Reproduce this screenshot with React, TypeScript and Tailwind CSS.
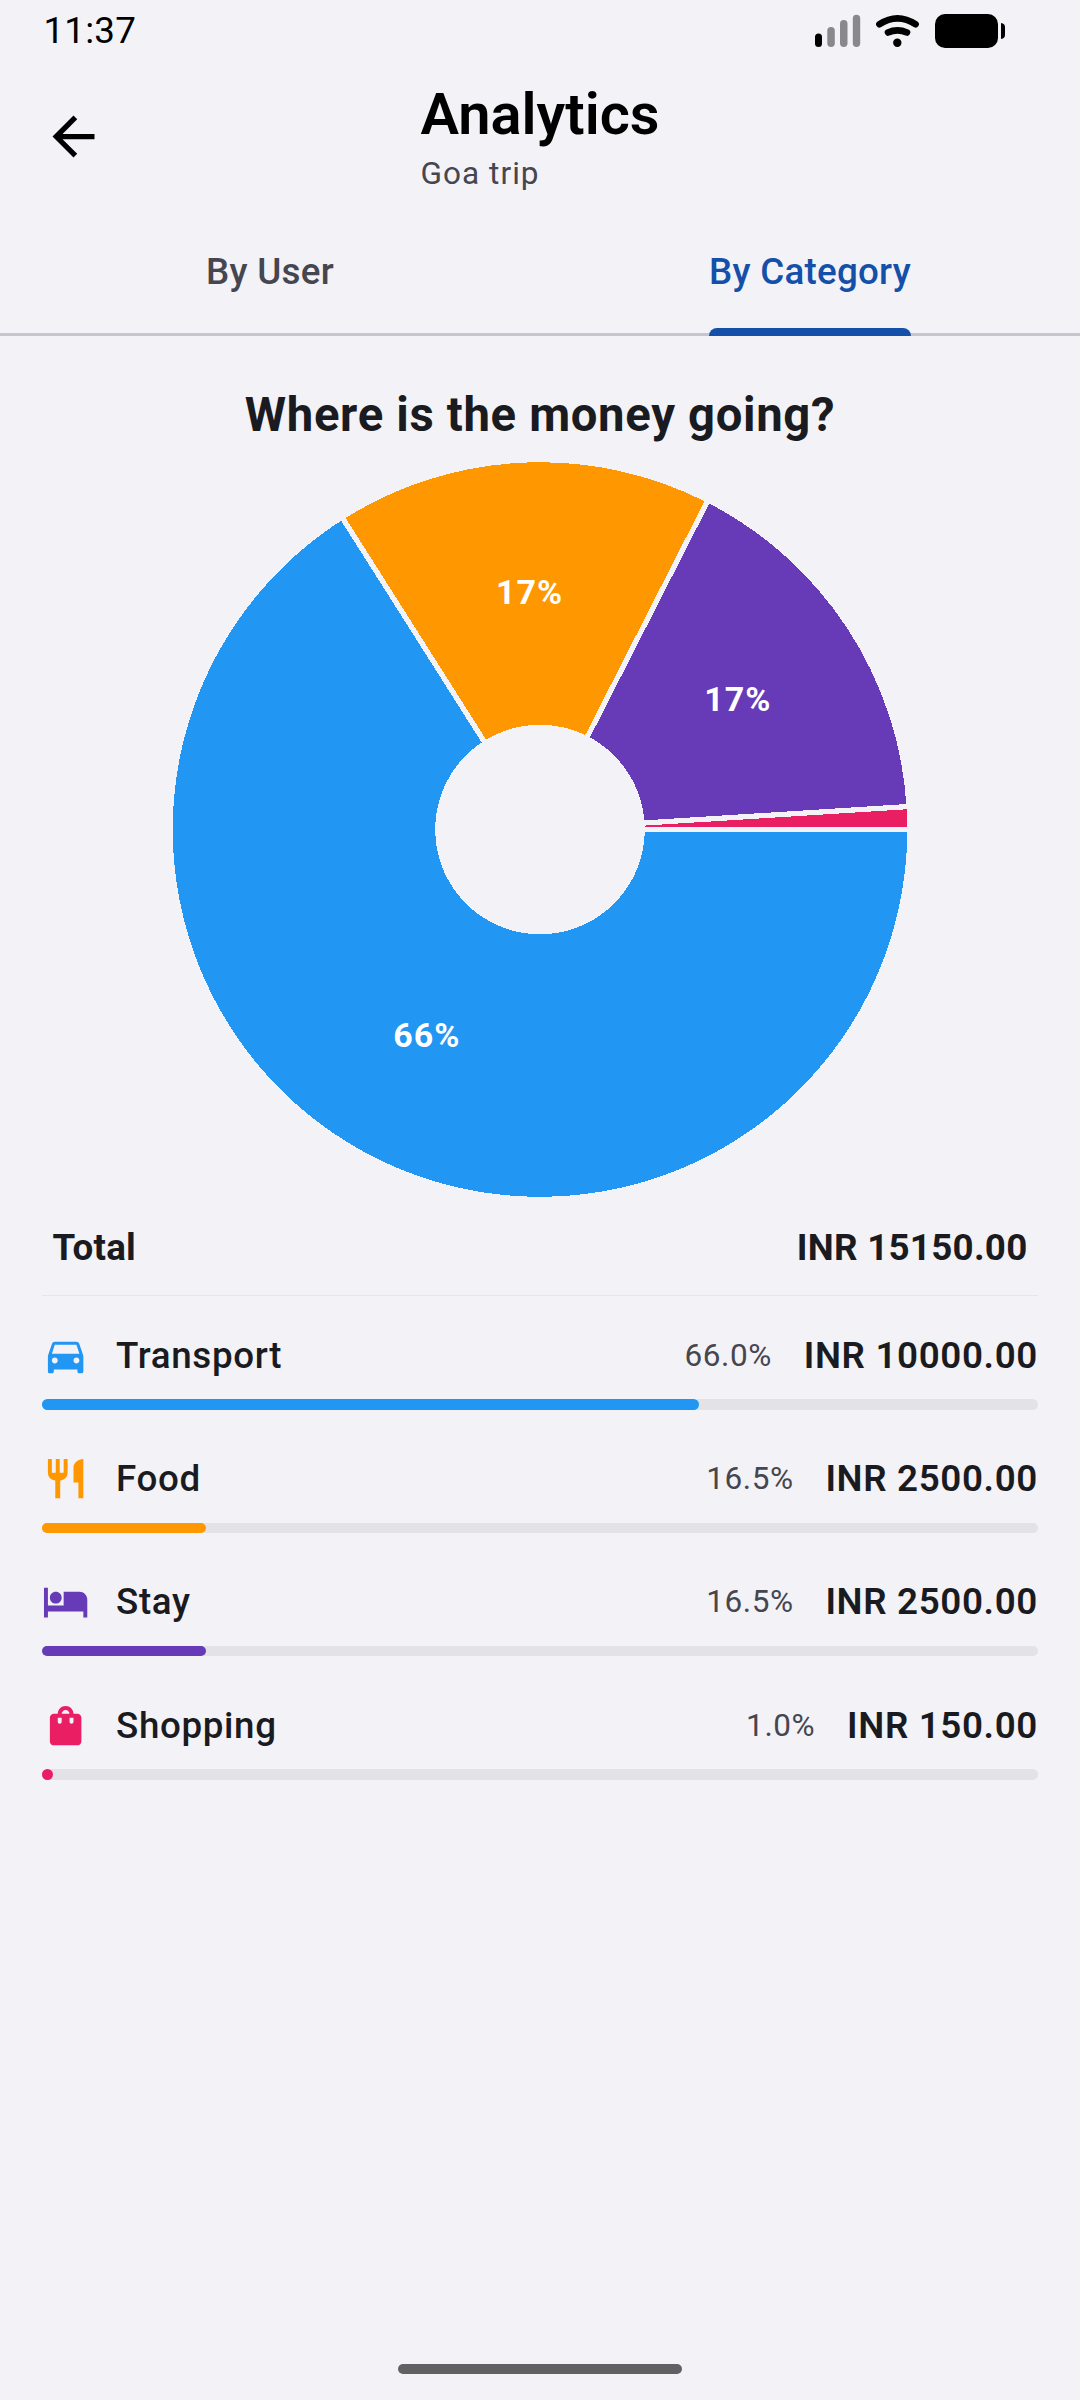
import { MdArrowBack, MdDirectionsCar, MdHotel, MdRestaurant, MdShoppingBag } from "react-icons/md";

const CATEGORIES = [
  { name: "Transport", amount: 10000, color: "#2196f3", icon: MdDirectionsCar },
  { name: "Food", amount: 2500, color: "#ff9800", icon: MdRestaurant },
  { name: "Stay", amount: 2500, color: "#673ab7", icon: MdHotel },
  { name: "Shopping", amount: 150, color: "#e91e63", icon: MdShoppingBag },
];

const TOTAL = CATEGORIES.reduce((sum, c) => sum + c.amount, 0);

const OUTER = 367.25;
const INNER = 104.75;
const GAP = 5.25;

function StatusBar() {
  return (
    <div className="flex h-[61px] items-center justify-between pl-[43.5px] pr-[75px]">
      <span className="pt-0.5 text-[36.75px] leading-none tracking-[0.2px] text-black">11:37</span>
      <svg className="mt-px" width="190" height="34" viewBox="815 14 190 34" fill="none">
        <rect x="815" y="33.5" width="7" height="13.5" rx="3.5" fill="#000" />
        <g fill="#89888b">
          <rect x="827.3" y="27" width="7.5" height="20" rx="3.7" />
          <rect x="840" y="20" width="7.5" height="27" rx="3.7" />
          <rect x="852.8" y="14.7" width="7.4" height="32.3" rx="3.7" />
        </g>
        <circle cx="897.3" cy="42.8" r="4.2" fill="#000" />
        <g stroke="#000" strokeWidth="6.6" strokeLinecap="round">
          <path d="M879.4 24.3Q897.5 12.3 915.6 24.3" />
          <path d="M888 32.5Q897.4 28.2 907 32.5" />
        </g>
        <rect x="935" y="14" width="63" height="34" rx="10" fill="#000" />
        <path d="M1001 23q4 .6 4 4v8q0 3.4-4 4z" fill="#000" />
      </svg>
    </div>
  );
}

function Header() {
  return (
    <header className="grid h-[151px] grid-cols-[1fr_auto_1fr] items-center px-[42px]">
      <MdArrowBack className="size-[63px] text-black" />
      <div>
        <h1 className="text-[57.75px] leading-[72.5px] font-semibold text-black">Analytics</h1>
        <p className="pt-[2.5px] text-[31.5px] leading-[42px] tracking-[1.05px] text-[#45464f]">
          Goa trip
        </p>
      </div>
    </header>
  );
}

function Tabs() {
  return (
    <nav className="grid h-[124px] grid-cols-2 justify-items-center text-[36.75px] font-medium tracking-[0.26px] shadow-[inset_0_-3px_0_#c6c6d0]">
      <div className="flex flex-col">
        <span className="h-[116px] leading-[119px] text-[#45464f]">By User</span>
      </div>
      <div className="flex flex-col">
        <span className="h-[116px] leading-[119px] text-[#144fa9]">By Category</span>
        <div className="h-2 rounded-t-[8px] bg-[#144fa9]" />
      </div>
    </nav>
  );
}

function PieChart() {
  let start = 0;
  const slices = CATEGORIES.map((c) => {
    const from = start;
    start += (c.amount / TOTAL) * Math.PI * 2;
    return { ...c, from, to: start, share: c.amount / TOTAL };
  });
  const point = (angle: number, r: number) => `${r * Math.cos(angle)} ${r * Math.sin(angle)}`;

  return (
    <svg className="mx-auto mt-[18px]" width="734" height="735" viewBox="-367 -367.5 734 735">
      <g shapeRendering="crispEdges">
        {slices.map((s) => {
          const large = s.share > 0.5 ? 1 : 0;
          return (
            <path
              key={s.name}
              fill={s.color}
              d={`M${point(s.from, OUTER)}A${OUTER} ${OUTER} 0 ${large} 1 ${point(s.to, OUTER)}L${point(s.to, INNER)}A${INNER} ${INNER} 0 ${large} 0 ${point(s.from, INNER)}Z`}
            />
          );
        })}
        {slices.map((s) => (
          <path
            key={s.name}
            stroke="#f3f2f7"
            strokeWidth={GAP}
            d={`M${point(s.from, INNER - 2)}L${point(s.from, OUTER + 2)}`}
          />
        ))}
      </g>
      {slices
        .filter((s) => s.share > 0.05)
        .map((s) => {
          const mid = (s.from + s.to) / 2;
          const r = (OUTER + INNER) / 2;
          return (
            <text
              key={s.name}
              x={r * Math.cos(mid) + 0.5}
              y={r * Math.sin(mid) + 10.5}
              textAnchor="middle"
              className="fill-white text-[34px] font-bold tracking-[1px]"
            >
              {Math.round(s.share * 100)}%
            </text>
          );
        })}
    </svg>
  );
}

function CategoryRow({ name, amount, color, icon: Icon }: (typeof CATEGORIES)[number]) {
  const percent = (amount / TOTAL) * 100;
  return (
    <li>
      <div className="flex h-[52.5px] items-center text-[36.75px] text-[#1a1b20]">
        <Icon className="mr-[26.75px] size-[47.25px]" style={{ color }} />
        <span className="flex-1 font-medium tracking-[0.65px]">{name}</span>
        <span className="mr-[31.75px] text-[31.5px] tracking-[0.6px] text-[#45464f]">
          {percent.toFixed(1)}%
        </span>
        <span className="font-semibold tracking-[0.65px]">INR {amount.toFixed(2)}</span>
      </div>
      <div className="mt-[17.7px] h-[10.5px] rounded-full bg-[#e2e2e7]">
        <div
          className="h-full min-w-[10.5px] rounded-full"
          style={{ width: `${percent}%`, backgroundColor: color }}
        />
      </div>
    </li>
  );
}

export default function App() {
  return (
    <div className="flex h-[2400px] w-[1080px] flex-col bg-[#f3f2f7] font-[Roboto,sans-serif]">
      <StatusBar />
      <Header />
      <Tabs />

      <main className="flex-1 px-[42px] pt-[50px]">
        <h2 className="text-center text-[47.25px] leading-[58px] font-bold tracking-[0.67px] text-[#1a1b20]">
          Where is the money going?
        </h2>
        <PieChart />

        <div className="flex h-[99px] items-center justify-between border-b border-[#e5e5ea] px-[10.5px] pt-[3px] text-[36.75px] font-bold tracking-[0.26px] text-[#1a1b20]">
          <span>Total</span>
          <span>INR {TOTAL.toFixed(2)}</span>
        </div>

        <ul className="mt-[33px] flex flex-col gap-[42.675px]">
          {CATEGORIES.map((c) => (
            <CategoryRow key={c.name} {...c} />
          ))}
        </ul>
      </main>

      <div className="mx-auto mb-[26px] h-2.5 w-[284px] rounded-full bg-[#616163]" />
    </div>
  );
}
